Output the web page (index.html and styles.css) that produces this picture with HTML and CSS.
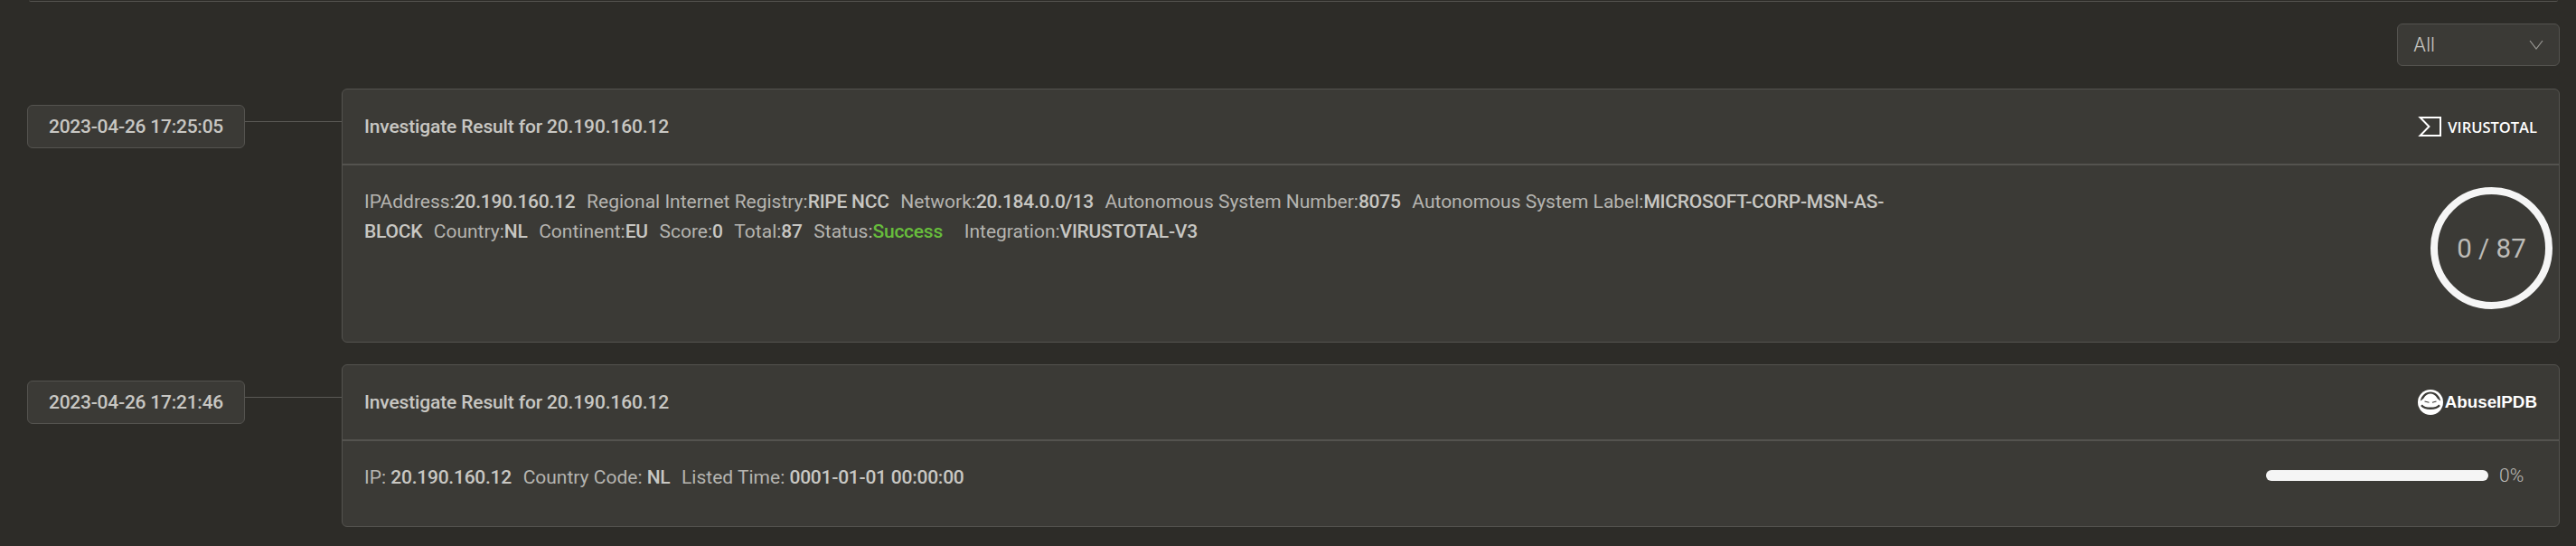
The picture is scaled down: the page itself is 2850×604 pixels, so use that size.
FILE: index.html
```html
<!DOCTYPE html>
<html lang="en">
<head>
<meta charset="utf-8">
<title>Investigate Results</title>
<link rel="stylesheet" href="styles.css">
</head>
<body>
<main class="page">
  <div class="stub"></div>
  <div class="filter-row">
    <div class="select">
      <span>All</span>
      <svg class="chevron" viewBox="0 0 16 11" width="16" height="11"><path d="M1 1l7 9 7-9" fill="none" stroke="#9a9995" stroke-width="1.2"/></svg>
    </div>
  </div>
  <section class="row row-vt">
    <div class="stamp">2023-04-26 17:25:05</div>
    <div class="connector"></div>
    <article class="card">
      <header class="card-head">
        <h3 class="title">Investigate Result for 20.190.160.12</h3>
        <div class="logo logo-vt">
          <svg viewBox="0 0 26 22" width="26" height="22"><path d="M2.6 1H25V21H2.6L12.4 11Z" fill="none" stroke="#fff" stroke-width="2"/></svg>
          <span class="vt-name">VIRUSTOTAL</span>
        </div>
      </header>
      <div class="card-body body-vt">
        <p class="facts"><span>IPAddress:</span><b>20.190.160.12</b> <span class="next">Regional Internet Registry:</span><b>RIPE NCC</b> <span class="next">Network:</span><b>20.184.0.0/13</b> <span class="next">Autonomous System Number:</span><b>8075</b> <span class="next">Autonomous System Label:</span><b>MICROSOFT-CORP-MSN-AS-BLOCK</b> <span class="next">Country:</span><b>NL</b> <span class="next">Continent:</span><b>EU</b> <span class="next">Score:</span><b>0</b> <span class="next">Total:</span><b>87</b> <span class="next">Status:</span><b class="ok">Success</b> <span class="next-wide">Integration:</span><b>VIRUSTOTAL-V3</b></p>
        <div class="ring"><span>0 / 87</span></div>
      </div>
    </article>
  </section>
  <section class="row row-ab">
    <div class="stamp">2023-04-26 17:21:46</div>
    <div class="connector"></div>
    <article class="card">
      <header class="card-head">
        <h3 class="title">Investigate Result for 20.190.160.12</h3>
        <div class="logo logo-ab">
          <svg viewBox="0 0 28 28" width="28" height="28">
            <circle cx="14" cy="14" r="14" fill="#fff"/>
            <path d="M2.8 12.5C4 6.5 8.5 2.6 14 2.6S24 6.5 25.2 12.5C23.5 11.5 22 10.5 21 8.8 19.5 6.2 16.8 4.6 14 4.6S8.5 6.2 7 8.8C6 10.5 4.5 11.5 2.8 12.5Z" fill="#3b3a36"/>
            <path d="M4 17.2C8 22 20 22 24 17.2" fill="none" stroke="#3b3a36" stroke-width="2.4"/>
            <path d="M7.5 13l5 1.2M16 14.2l4.5-1.2" stroke="#3b3a36" stroke-width="1.1"/>
          </svg>
          <span class="ab-name">AbuseIPDB</span>
        </div>
      </header>
      <div class="card-body body-ab">
        <p class="facts"><span>IP: </span><b>20.190.160.12</b> <span class="next">Country Code: </span><b>NL</b> <span class="next">Listed Time: </span><b>0001-01-01 00:00:00</b></p>
        <div class="meter">
          <div class="meter-bar"></div>
          <span class="meter-value">0%</span>
        </div>
      </div>
    </article>
  </section>
</main>
</body>
</html>
```
FILE: styles.css
```css
* { box-sizing: border-box; }
html, body { margin: 0; padding: 0; }
body {
  width: 2850px;
  height: 604px;
  overflow: hidden;
  background: #2d2c28;
  color: #bdbcb8;
  font-family: Roboto, "Liberation Sans", sans-serif;
  font-size: 21px;
}
.page { padding: 0 18px 0 30px; display: flex; flex-direction: column; }
.stub {
  height: 2px;
  margin: 0 2px 0 2px;
  border-bottom: 1.5px solid #54534f;
  border-radius: 0 0 4px 4px;
}
.filter-row { display: flex; justify-content: flex-end; margin-top: 24px; }
.select {
  width: 180px;
  height: 47px;
  padding: 0 17px;
  display: flex;
  align-items: center;
  justify-content: space-between;
  background: #3b3a36;
  border: 1.5px solid #54534f;
  border-radius: 6px;
  font-family: Inter, Roboto, sans-serif;
  font-weight: 300;
  font-size: 21px;
  color: #c4c3bf;
}
.row { display: flex; align-items: flex-start; }
.row-vt { margin-top: 25px; }
.row-ab { margin-top: 24px; }
.stamp {
  width: 241px;
  height: 48px;
  margin-top: 18px;
  flex: none;
  display: flex;
  align-items: center;
  justify-content: center;
  background: #3b3a36;
  border: 1.5px solid #54534f;
  border-radius: 6px;
  font-weight: 500;
  letter-spacing: -.24px;
  color: #c8c7c3;
}
.connector { flex: none; width: 107px; height: 1px; margin-top: 36px; background: #5a5955; }
.card {
  flex: 1;
  min-width: 0;
  background: #3b3a36;
  border: 1.5px solid #54534f;
  border-radius: 6px;
}
.card-head {
  height: 84px;
  padding: 0 24px;
  display: flex;
  align-items: center;
  justify-content: space-between;
  border-bottom: 2px solid #54534f;
}
.title { margin: 0; font-size: 21px; font-weight: 500; letter-spacing: -.15px; color: #c8c7c3; }
.logo { display: flex; align-items: center; }
.logo-vt { gap: 7px; }
.vt-name {
  font-family: "Open Sans", sans-serif;
  font-weight: 600;
  font-size: 16.5px;
  color: #fff;
}
.logo-ab { gap: 2px; }
.ab-name { font-family: "Liberation Sans", sans-serif; font-weight: 700; font-size: 18.8px; color: #fff; }
.card-body { display: flex; justify-content: space-between; padding: 24px 24px; }
.body-vt { height: 195px; padding-right: 7px; padding-top: 24px; }
.body-ab { height: 94px; padding-top: 24px; }
.facts { margin: 0; width: 1700px; line-height: 33px; font-weight: 400; color: #b5b4b0; }
.next { margin-left: 7.4px; }
.next-wide { margin-left: 18.5px; }
.facts b { font-weight: 500; letter-spacing: -.24px; color: #c8c7c3; }
.facts b.ok { color: #67bd3c; }
.ring {
  flex: none;
  width: 135px;
  height: 135px;
  display: flex;
  align-items: center;
  justify-content: center;
  border: 8.5px solid #f5f5f5;
  border-radius: 50%;
  font-size: 29.5px;
  font-weight: 400;
  color: #bdbcb8;
}
.meter { display: flex; align-items: center; gap: 12px; height: 33px; margin-right: 15px; margin-top: -3px; }
.meter-bar { width: 246px; height: 12px; background: #f5f5f5; border-radius: 6px; }
.meter-value { width: 27px; font-weight: 300; color: #bdbcb8; }
```
